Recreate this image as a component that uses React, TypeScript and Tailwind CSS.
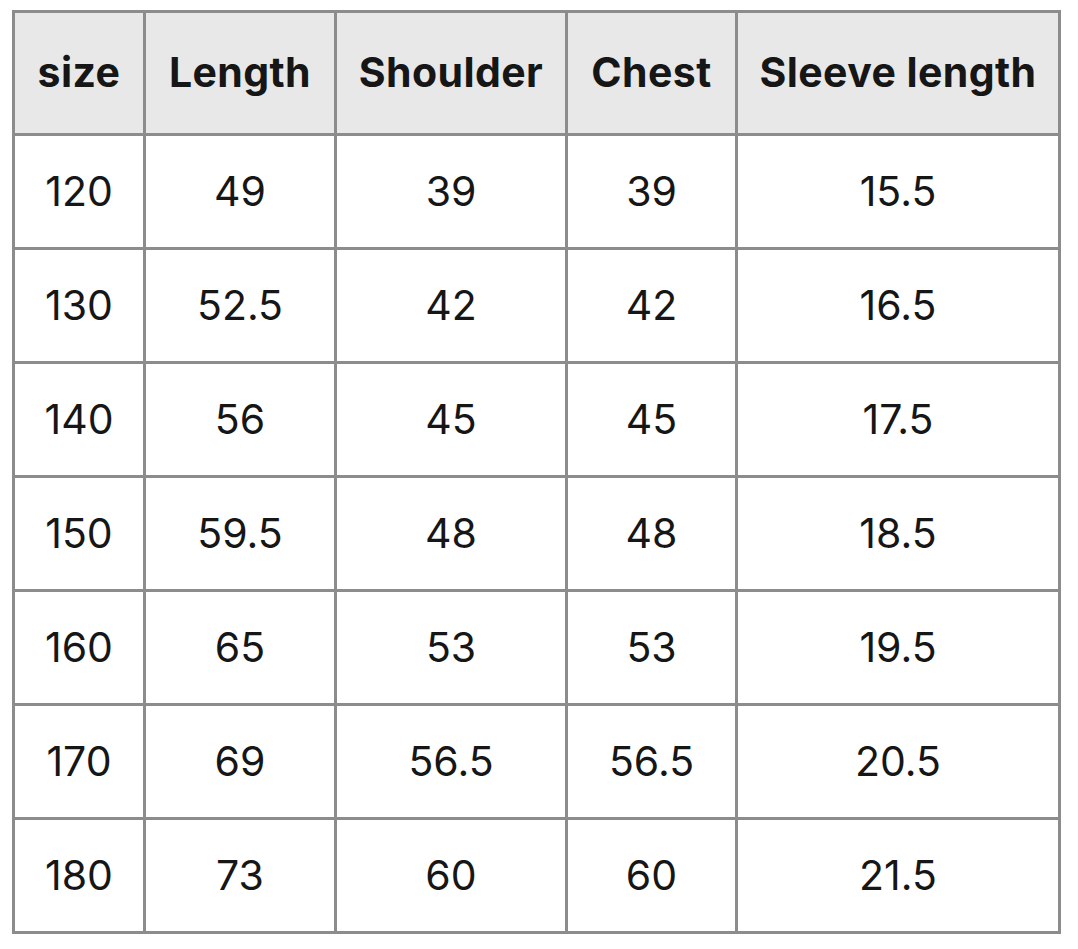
const headers = ["size", "Length", "Shoulder", "Chest", "Sleeve length"];

const rows = [
  ["120", "49", "39", "39", "15.5"],
  ["130", "52.5", "42", "42", "16.5"],
  ["140", "56", "45", "45", "17.5"],
  ["150", "59.5", "48", "48", "18.5"],
  ["160", "65", "53", "53", "19.5"],
  ["170", "69", "56.5", "56.5", "20.5"],
  ["180", "73", "60", "60", "21.5"],
];

export default function App() {
  return (
    <div className="min-h-[949px] w-[1078px] bg-white pl-[12px] pt-[10px] font-['Inter',sans-serif] text-[#161616]">
      <div className="grid w-fit grid-cols-[128px_188px_228px_167px_320px] grid-rows-[120px_repeat(7,111px)] gap-[3px] border-[3px] border-[#8c8c8c] bg-[#8c8c8c]">
        {headers.map((h) => (
          <div
            key={h}
            className="flex items-center justify-center bg-[#e8e8e8] text-[41px] font-bold tracking-[0.01em]"
          >
            {h}
          </div>
        ))}
        {rows.map((row) =>
          row.map((cell, i) => (
            <div
              key={row[0] + "-" + i}
              className="flex items-center justify-center bg-white text-[41px]"
            >
              {cell}
            </div>
          ))
        )}
      </div>
    </div>
  );
}
